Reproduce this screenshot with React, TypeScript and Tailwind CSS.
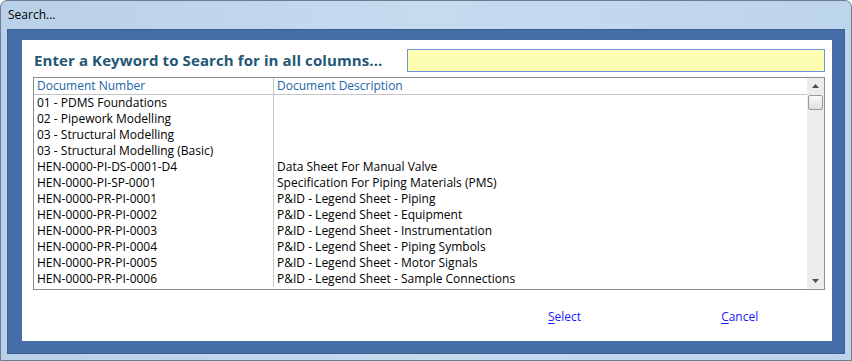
const rows: [string, string][] = [
  ['01 - PDMS Foundations', ''],
  ['02 - Pipework Modelling', ''],
  ['03 - Structural Modelling', ''],
  ['03 - Structural Modelling (Basic)', ''],
  ['HEN-0000-PI-DS-0001-D4', 'Data Sheet For Manual Valve'],
  ['HEN-0000-PI-SP-0001', 'Specification For Piping Materials (PMS)'],
  ['HEN-0000-PR-PI-0001', 'P&ID - Legend Sheet - Piping'],
  ['HEN-0000-PR-PI-0002', 'P&ID - Legend Sheet - Equipment'],
  ['HEN-0000-PR-PI-0003', 'P&ID - Legend Sheet - Instrumentation'],
  ['HEN-0000-PR-PI-0004', 'P&ID - Legend Sheet - Piping Symbols'],
  ['HEN-0000-PR-PI-0005', 'P&ID - Legend Sheet - Motor Signals'],
  ['HEN-0000-PR-PI-0006', 'P&ID - Legend Sheet - Sample Connections'],
];

const ui = { fontFamily: '"Open Sans", "Noto Sans", sans-serif' };

function ScrollArrow({ up }: { up?: boolean }) {
  return (
    <div className="flex h-[16px] items-center justify-center">
      <svg width="7" height="4" viewBox="0 0 7 4">
        <path d={up ? 'M0 4 L3.5 0 L7 4 Z' : 'M0 0 L3.5 4 L7 0 Z'} fill="#4d4d4d" />
      </svg>
    </div>
  );
}

export default function App() {
  return (
    <div
      className="flex h-[361px] w-[852px] flex-col overflow-hidden rounded-t-[7px] border border-[#6d7d8f] bg-gradient-to-r from-[#b9d0e8] via-[#c7dbef] to-[#bcd4ec]"
      style={ui}
    >
      <div className="flex h-[28px] items-center pl-[7px] text-[12px] text-black">Search...</div>
      <div className="mx-[6px] mb-[6px] flex flex-1 border border-[#3c5f8f] bg-[#456ea8] pb-[12px] pl-[14px] pr-[12px] pt-[10px]">
        <div className="flex flex-1 flex-col bg-white pl-[11px] pr-[7px] pt-[9px]">
          <div className="flex h-[23px] items-center">
            <div className="w-[374px] pl-[1px] text-[15px] font-bold tracking-[0.1px] text-[#235775]">
              Enter a Keyword to Search for in all columns...
            </div>
            <input className="h-[23px] flex-1 border border-[#6b93d6] bg-[#fefeb3] outline-none" />
          </div>
          <div className="mt-[5px] flex h-[213px] border border-[#8a8d92]">
            <div className="flex-1 text-[12px] leading-[16px]">
              <div className="flex h-[17px] border-b border-[#c5c5c5] text-[#1c63a8]">
                <div className="w-[240px] border-r border-[#c5c5c5] pl-[3px]">Document Number</div>
                <div className="pl-[3px]">Document Description</div>
              </div>
              {rows.map(([num, desc]) => (
                <div key={num} className="flex h-[16px] text-black">
                  <div className="w-[240px] border-r border-[#c5c5c5] pl-[3px] whitespace-nowrap">{num}</div>
                  <div className="pl-[3px] whitespace-nowrap">{desc}</div>
                </div>
              ))}
            </div>
            <div className="flex w-[17px] flex-col bg-[#ececec]">
              <ScrollArrow up />
              <div className="mx-[1px] mt-[1px] h-[15px] rounded-[2px] border border-[#9a9a9a] bg-gradient-to-b from-[#fbfbfb] to-[#dedede]" />
              <div className="flex-1" />
              <ScrollArrow />
            </div>
          </div>
          <div className="flex flex-1 items-center pl-[515px] pt-[3px] text-[12px] text-[#1a1aff]">
            <div>
              <span className="underline underline-offset-2">S</span>elect
            </div>
            <div className="ml-[140px]">
              <span className="underline underline-offset-2">C</span>ancel
            </div>
          </div>
        </div>
      </div>
    </div>
  );
}
